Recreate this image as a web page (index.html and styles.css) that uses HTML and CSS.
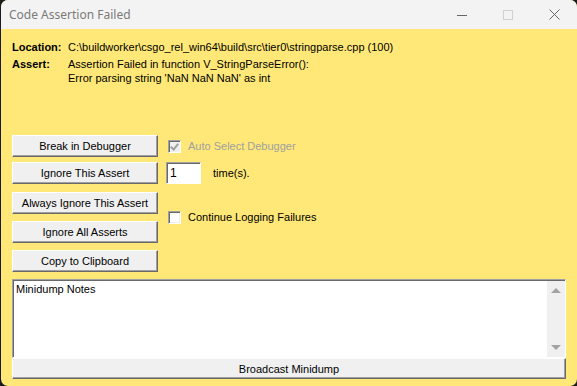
FILE: index.html
```html
<!DOCTYPE html>
<html lang="en">
<head>
  <meta charset="UTF-8">
  <title>Code Assertion Failed</title>
  <link rel="stylesheet" href="styles.css">
</head>
<body>
  <div class="window">
    <div class="titlebar">
      <span class="title">Code Assertion Failed</span>
      <div class="controls">
        <span class="ctl"><svg width="10" height="10" viewBox="0 0 10 10"><line x1="0" y1="5.5" x2="10" y2="5.5" stroke="#666" stroke-width="1"/></svg></span>
        <span class="ctl"><svg width="10" height="10" viewBox="0 0 10 10"><rect x="0.5" y="0.5" width="9" height="9" fill="none" stroke="#d0d0d0" stroke-width="1"/></svg></span>
        <span class="ctl"><svg width="11" height="11" viewBox="0 0 11 11"><path d="M0.5 0.5 L10.5 10.5 M10.5 0.5 L0.5 10.5" stroke="#666" stroke-width="1"/></svg></span>
      </div>
    </div>

    <div class="content">
      <div class="info">
        <span class="label">Location:</span>
        <span>C:\buildworker\csgo_rel_win64\build\src\tier0\stringparse.cpp (100)</span>
        <span class="label">Assert:</span>
        <span>Assertion Failed in function V_StringParseError():<br>Error parsing string 'NaN NaN NaN' as int</span>
      </div>

      <div class="actions">
        <div class="buttons">
          <button class="btn">Break in Debugger</button>
          <button class="btn">Ignore This Assert</button>
          <button class="btn">Always Ignore This Assert</button>
          <button class="btn">Ignore All Asserts</button>
          <button class="btn">Copy to Clipboard</button>
        </div>
        <div class="options">
          <label class="option disabled"><span class="check checked"></span>Auto Select Debugger</label>
          <div class="option"><span class="count">1</span><span class="times">time(s).</span></div>
          <label class="option continue"><span class="check"></span>Continue Logging Failures</label>
        </div>
      </div>

      <div class="notes">
        <div class="notes-text">Minidump Notes</div>
        <div class="scrollbar">
          <span class="arrow up"></span>
          <span class="arrow down"></span>
        </div>
      </div>
      <button class="btn wide">Broadcast Minidump</button>
    </div>
  </div>
</body>
</html>
```

FILE: styles.css
```css
:root {
  --yellow: #ffe878;
  --face: #f0f0f0;
  --shadow: #696969;
  --light-shadow: #a0a0a0;
}

body {
  margin: 0;
  background: #1c1c1c;
  font-family: 'Liberation Sans', Arial, sans-serif;
  font-size: 11px;
  color: #000;
}

.window {
  width: 576px;
  height: 386px;
  margin-left: 1px;
  background: var(--yellow);
  border-radius: 7px;
  overflow: hidden;
}

.titlebar {
  height: 29px;
  background: #f3f3f3;
  display: flex;
  align-items: center;
  justify-content: space-between;
  padding-left: 8px;
}

.title {
  font-family: 'Noto Sans', 'Open Sans', sans-serif;
  font-size: 12px;
  color: #7a7a7a;
}

.controls {
  display: flex;
  height: 100%;
}

.ctl {
  width: 46px;
  display: flex;
  align-items: center;
  justify-content: center;
}

.content {
  padding: 11px 10px 0 11px;
}

.info {
  display: grid;
  grid-template-columns: 56px 1fr;
  line-height: 14px;
  row-gap: 3px;
}

.label {
  font-weight: bold;
}

.actions {
  display: flex;
  gap: 8px;
  margin-top: 50px;
}

.buttons {
  display: flex;
  flex-direction: column;
  width: 146px;
}

.btn {
  height: 22px;
  padding: 0;
  background: var(--face);
  border: 1px solid;
  border-color: #fff var(--shadow) var(--shadow) #fff;
  box-shadow: inset -1px -1px 0 var(--light-shadow);
  font-family: inherit;
  font-size: 11px;
  color: #000;
}

.buttons .btn + .btn {
  margin-top: 7px;
}

.buttons .btn:nth-child(2) {
  margin-top: 5px;
}

.buttons .btn:nth-child(3) {
  margin-top: 8px;
}

.options {
  display: flex;
  flex-direction: column;
}

.option {
  height: 22px;
  display: flex;
  align-items: center;
}

.option + .option {
  margin-top: 5px;
}

.option.continue {
  margin-top: 22px;
}

.option.disabled {
  color: #a0a0a0;
}

.check {
  width: 11px;
  height: 11px;
  margin: 0 7px 0 2px;
  background: #fff;
  border: 1px solid;
  border-color: #a0a0a0 #fff #fff #a0a0a0;
  box-shadow: inset 1px 1px 0 var(--shadow), inset -1px -1px 0 var(--face);
  position: relative;
}

.disabled .check {
  background: var(--face);
}

.check.checked::after {
  content: "";
  position: absolute;
  left: 3px;
  top: 1px;
  width: 3px;
  height: 6px;
  border: solid #a0a0a0;
  border-width: 0 2px 2px 0;
  transform: rotate(40deg);
}

.count {
  width: 30px;
  height: 20px;
  padding-left: 3px;
  line-height: 20px;
  background: #fff;
  border: 1px solid;
  border-color: #a0a0a0 #fff #fff #a0a0a0;
  box-shadow: inset 1px 1px 0 var(--shadow);
  font-size: 12px;
}

.times {
  margin-left: 12px;
}

.notes {
  margin-top: 7px;
  width: 554px;
  height: 79px;
  box-sizing: border-box;
  display: flex;
  background: #fff;
  border: 1px solid;
  border-color: var(--light-shadow) #fff #fff var(--light-shadow);
  box-shadow: inset 1px 1px 0 var(--shadow);
}

.notes-text {
  flex: 1;
  padding: 3px 0 0 3px;
}

.scrollbar {
  width: 18px;
  margin: 1px 0 0;
  background: var(--face);
  display: flex;
  flex-direction: column;
  justify-content: space-between;
  align-items: center;
  padding: 7px 0;
}

.arrow {
  width: 0;
  height: 0;
  border-left: 5px solid transparent;
  border-right: 5px solid transparent;
}

.arrow.up {
  border-bottom: 5px solid #a3a3a3;
}

.arrow.down {
  border-top: 5px solid #a3a3a3;
}

.btn.wide {
  display: block;
  width: 554px;
  height: 21px;
}
```
